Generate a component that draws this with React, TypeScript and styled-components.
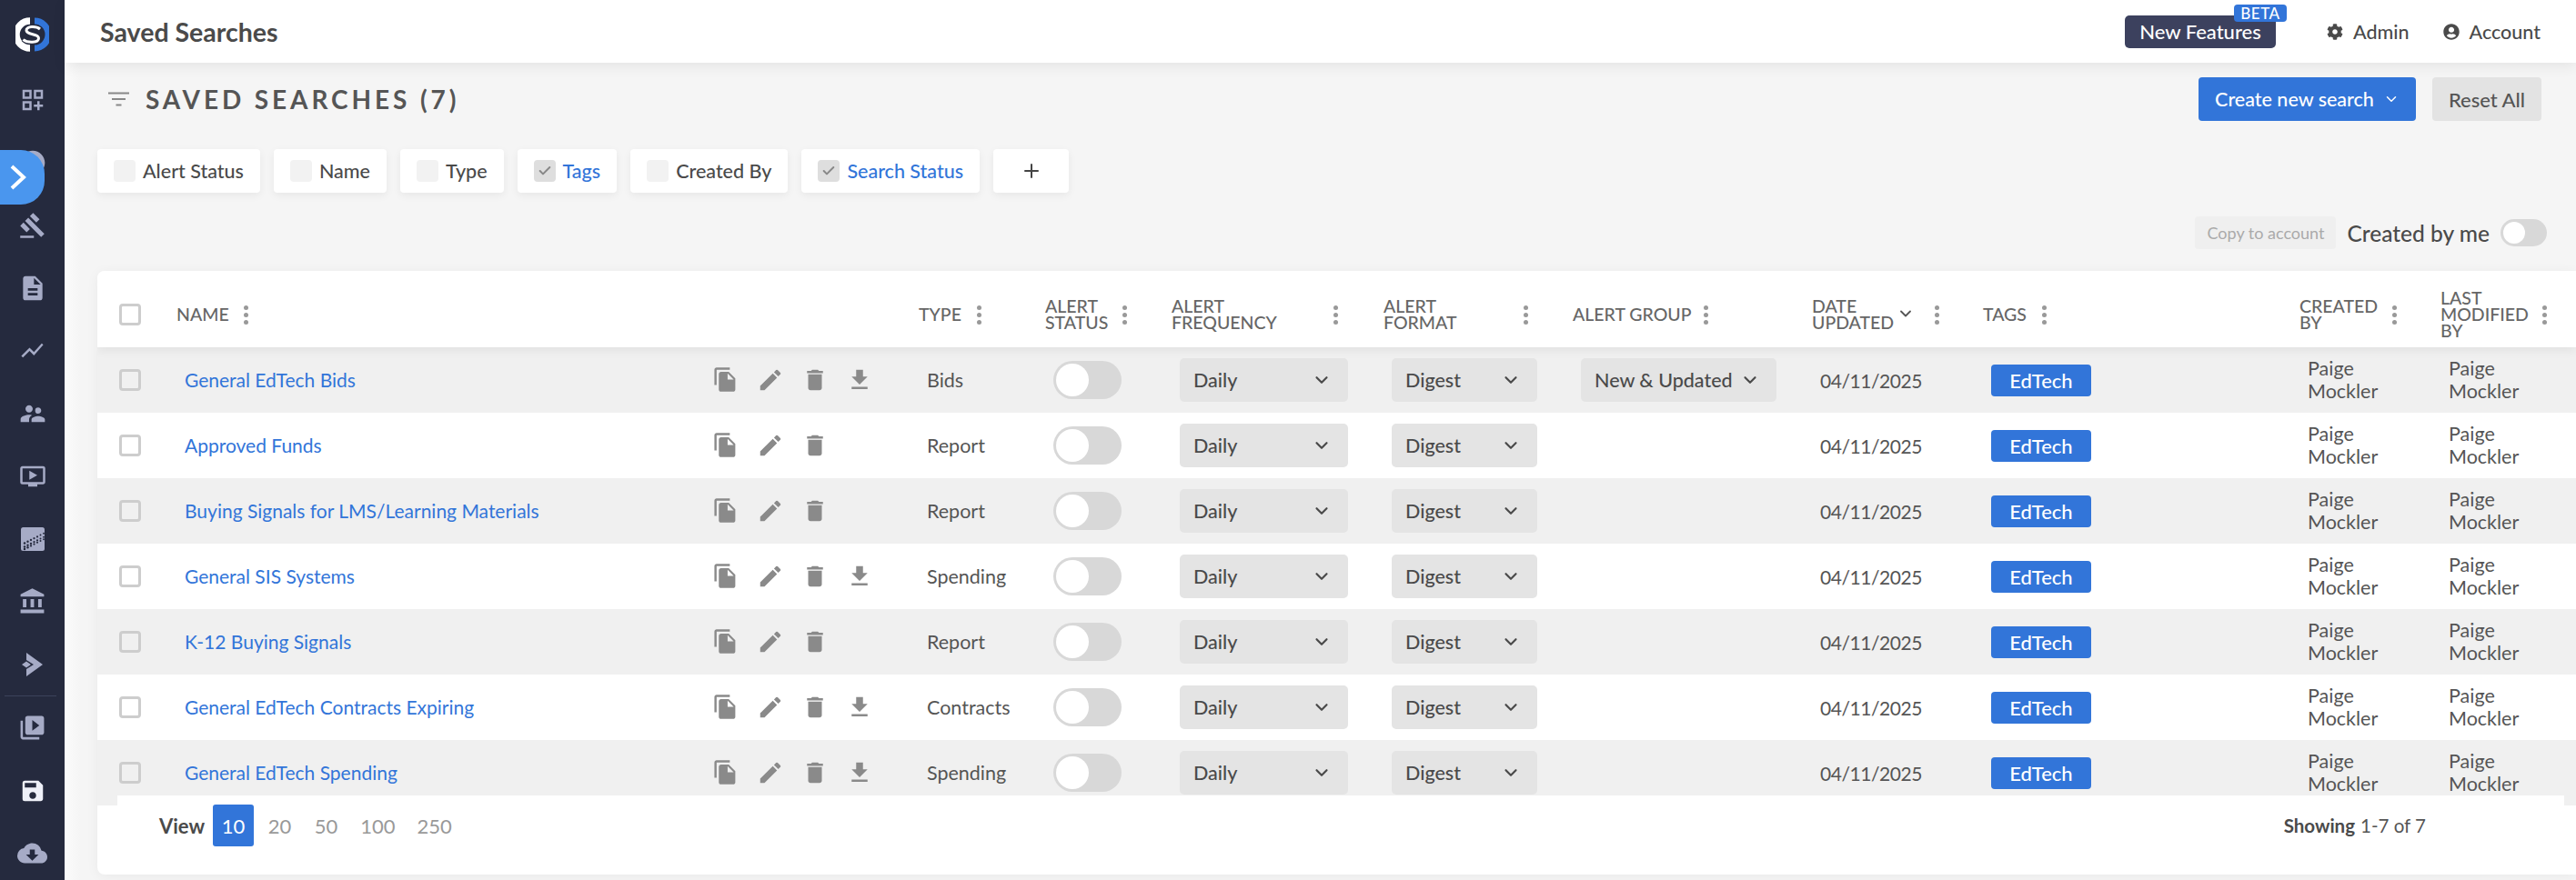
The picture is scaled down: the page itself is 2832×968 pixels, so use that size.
import React from "react";
import styled, { createGlobalStyle } from "styled-components";
import { ChevronDown, Check, Plus } from "lucide-react";
import { FaCog, FaUserCircle } from "react-icons/fa";
import {
  MdOutlineDashboardCustomize,
  MdAccountCircle,
  MdGavel,
  MdDescription,
  MdShowChart,
  MdSupervisorAccount,
  MdOndemandVideo,
  MdAccountBalance,
  MdVideoLibrary,
  MdSave,
  MdCloudDownload,
  MdFileCopy,
  MdEdit,
  MdDelete,
  MdFileDownload,
} from "react-icons/md";

const COLUMNS = "77px 590px 226px 139px 139px 233px 208px 263px 188px 348px 155px 1fr";

const GlobalStyle = createGlobalStyle`
  html, body {
    margin: 0;
    padding: 0;
    height: 968px;
    overflow: hidden;
    background: #f5f5f5;
    font-family: Lato, "Open Sans", sans-serif;
    color: #555;
  }
`;

const Page = styled.div`
  display: flex;
  width: 2832px;
  height: 968px;
  overflow: hidden;
`;

const Sidebar = styled.nav`
  position: relative;
  flex: 0 0 71px;
  background: #252a3e;
  display: flex;
  flex-direction: column;
  color: #a6abc6;
`;

const LogoBox = styled.div`
  height: 75px;
  display: flex;
  justify-content: center;
  align-items: center;
  flex: 0 0 75px;
`;

const NavItem = styled.div<{ $light?: boolean }>`
  height: 69px;
  flex: 0 0 69px;
  display: flex;
  justify-content: center;
  align-items: center;
  color: ${(p) => (p.$light ? "#eef0f8" : "#a6abc6")};
`;

const Divider = styled.div`
  height: 1px;
  flex: 0 0 1px;
  margin: 0 9px 0 5px;
  background: #3c425b;
`;

const ExpandTab = styled.div`
  position: absolute;
  left: 0;
  top: 165px;
  width: 49px;
  height: 60px;
  background: #4a96ee;
  border-radius: 0 26px 26px 0;
  display: flex;
  align-items: center;
  padding-left: 11px;
  box-sizing: border-box;
`;

const Main = styled.main`
  flex: 1;
  min-width: 0;
  display: flex;
  flex-direction: column;
`;

const Header = styled.header`
  height: 69px;
  flex: 0 0 69px;
  background: #fff;
  box-shadow: 0 4px 14px rgba(0, 0, 0, 0.07);
  display: flex;
  align-items: center;
  justify-content: space-between;
  padding: 0 39px;
  position: relative;
  z-index: 2;
`;

const PageName = styled.h1`
  margin: 0;
  font-size: 28.5px;
  font-weight: 700;
  color: #4a4a4a;
`;

const HeaderRight = styled.div`
  display: flex;
  align-items: center;
`;

const FeaturesButton = styled.div`
  position: relative;
  width: 166px;
  height: 36px;
  background: #3c415e;
  border-radius: 5px;
  color: #fff;
  font-size: 22px;
  font-weight: 500;
  display: flex;
  align-items: center;
  justify-content: center;
  margin-right: 56px;
`;

const BetaBadge = styled.span`
  position: absolute;
  top: -12px;
  right: -12px;
  width: 58px;
  height: 19px;
  background: #3275d9;
  border-radius: 4px;
  color: #fff;
  font-size: 17px;
  line-height: 19px;
  text-align: center;
  letter-spacing: 0.5px;
`;

const HeaderLink = styled.div`
  display: flex;
  align-items: center;
  gap: 11px;
  font-size: 21.5px;
  font-weight: 500;
  color: #4a4a4a;
  & + & {
    margin-left: 37px;
  }
`;

const Content = styled.div`
  flex: 1;
  min-height: 0;
  padding: 16px 0 0 36px;
  background: linear-gradient(90deg, #fbfbfb, #f5f5f5 18px);
`;

const Toolbar = styled.div`
  height: 48px;
  display: flex;
  align-items: center;
  justify-content: space-between;
  padding: 0 38px 0 12px;
`;

const SectionTitle = styled.div`
  display: flex;
  align-items: center;
  gap: 18px;
  font-size: 28px;
  font-weight: 700;
  letter-spacing: 3.9px;
  color: #555;
`;

const ToolbarActions = styled.div`
  display: flex;
  gap: 18px;
`;

const PrimaryButton = styled.div`
  width: 239px;
  height: 48px;
  background: #3275d9;
  border-radius: 4px;
  color: #fff;
  font-size: 21.5px;
  font-weight: 500;
  display: flex;
  align-items: center;
  justify-content: center;
  gap: 10px;
`;

const GreyButton = styled.div`
  width: 120px;
  height: 48px;
  background: #e3e3e3;
  border-radius: 4px;
  color: #555;
  font-size: 22px;
  font-weight: 500;
  display: flex;
  align-items: center;
  justify-content: center;
`;

const Filters = styled.div`
  display: flex;
  gap: 15px;
  margin-top: 31px;
`;

const Chip = styled.div<{ $on?: boolean }>`
  height: 48px;
  background: #fff;
  border-radius: 4px;
  box-shadow: 0 3px 10px rgba(0, 0, 0, 0.06);
  display: flex;
  align-items: center;
  gap: 8px;
  padding: 0 18px;
  font-size: 21.5px;
  font-weight: 500;
  color: ${(p) => (p.$on ? "#3275d9" : "#4a4a4a")};
`;

const PlusChip = styled(Chip)`
  width: 83px;
  padding: 0;
  justify-content: center;
  box-sizing: border-box;
  color: #444;
`;

const ChipBox = styled.span<{ $on?: boolean }>`
  width: 24px;
  height: 24px;
  border-radius: 4px;
  background: ${(p) => (p.$on ? "#dedede" : "#f2f2f2")};
  display: flex;
  align-items: center;
  justify-content: center;
  color: #888;
`;

const OwnerRow = styled.div`
  height: 36px;
  margin-top: 26px;
  display: flex;
  justify-content: flex-end;
  align-items: center;
  padding-right: 32px;
`;

const CopyButton = styled.div`
  width: 155px;
  height: 36px;
  background: #efefef;
  border-radius: 4px;
  color: #aaa;
  font-size: 18px;
  display: flex;
  align-items: center;
  justify-content: center;
`;

const OwnerLabel = styled.span`
  margin: 0 12px;
  font-size: 24.5px;
  font-weight: 500;
  color: #4a4a4a;
`;

const SmallSwitch = styled.span`
  width: 51px;
  height: 30px;
  background: #d8d8d8;
  border-radius: 15px;
  padding: 3px;
  box-sizing: border-box;
  &::before {
    content: "";
    display: block;
    width: 24px;
    height: 24px;
    border-radius: 50%;
    background: #fff;
  }
`;

const Card = styled.section`
  margin-top: 24px;
  height: 664px;
  background: #fff;
  border-radius: 8px 0 0 8px;
  box-shadow: 0 2px 14px rgba(0, 0, 0, 0.05);
  overflow: hidden;
`;

const HeadRow = styled.div`
  position: relative;
  z-index: 1;
  height: 84px;
  box-sizing: border-box;
  padding-top: 12px;
  display: grid;
  grid-template-columns: ${COLUMNS};
  align-items: center;
  background: #fff;
  box-shadow: 0 4px 10px rgba(0, 0, 0, 0.06);
`;

const HeadCell = styled.div`
  display: flex;
  align-items: center;
  padding-left: 10px;
  font-size: 19.5px;
  line-height: 18px;
  font-weight: 500;
  color: #666;
  text-transform: uppercase;
`;

const HeadLabel = styled.div<{ $w: number }>`
  width: ${(p) => p.$w}px;
  flex: 0 0 auto;
  display: flex;
  align-items: center;
  span {
    display: block;
  }
`;

const Kebab = styled.span`
  display: flex;
  flex-direction: column;
  gap: 3px;
  i {
    width: 5px;
    height: 5px;
    border-radius: 50%;
    background: #999;
  }
`;

const SortIcon = styled.span`
  display: flex;
  margin-left: 3px;
  color: #555;
`;

const Body = styled.div`
  height: 504px;
`;

const Row = styled.div<{ $alt: boolean }>`
  height: 72px;
  display: grid;
  grid-template-columns: ${COLUMNS};
  align-items: center;
  background: ${(p) => (p.$alt ? "#f0f0f0" : "#fff")};
`;

const CheckCell = styled.div`
  padding-left: 24px;
`;

const BoxMark = styled.span`
  display: block;
  width: 24px;
  height: 24px;
  box-sizing: border-box;
  border: 3px solid #cdcdcd;
  border-radius: 4px;
`;

const Cell = styled.div`
  padding-left: 19px;
  font-size: 21.5px;
  color: #555;
`;

const DateCell = styled(Cell)`
  font-size: 21px;
  letter-spacing: -0.45px;
`;

const NameLink = styled.a`
  color: #3275d9;
  font-size: 21px;
  text-decoration: none;
`;

const Actions = styled.div`
  display: flex;
  color: #8a8a8a;
  margin-left: -1px;
`;

const ActionSlot = styled.span`
  width: 49px;
  display: flex;
  justify-content: center;
`;

const Toggle = styled.span`
  display: block;
  width: 75px;
  height: 42px;
  background: #d8d8d8;
  border-radius: 21px;
  padding: 3px;
  box-sizing: border-box;
  &::before {
    content: "";
    display: block;
    width: 36px;
    height: 36px;
    border-radius: 50%;
    background: #fff;
  }
`;

const Select = styled.div<{ $w: number }>`
  width: ${(p) => p.$w}px;
  height: 48px;
  box-sizing: border-box;
  background: #e4e4e4;
  border-radius: 5px;
  display: flex;
  align-items: center;
  justify-content: space-between;
  padding: 0 18px 0 15px;
  font-size: 21.5px;
  font-weight: 500;
  color: #4a4a4a;
`;

const Tag = styled.span`
  display: flex;
  width: 110px;
  height: 35px;
  background: #3275d9;
  border-radius: 4px;
  color: #fff;
  font-size: 22px;
  font-weight: 500;
  align-items: center;
  justify-content: center;
`;

const PersonCell = styled(Cell)`
  line-height: 25px;
  width: 90px;
`;

const Footer = styled.div`
  position: relative;
  height: 87px;
  margin: -11px 13px 0 22px;
  background: #fff;
  display: flex;
  align-items: flex-start;
  justify-content: space-between;
  padding: 10px 152px 0 46px;
  box-sizing: border-box;
`;

const Pager = styled.div`
  display: flex;
  align-items: center;
  font-size: 22px;
  color: #999;
`;

const ViewLabel = styled.span`
  font-weight: 700;
  color: #4a4a4a;
  margin-right: 9px;
`;

const PageNum = styled.span<{ $active?: boolean }>`
  height: 46px;
  min-width: 45px;
  box-sizing: border-box;
  padding: 0 9px;
  margin-right: 6px;
  display: flex;
  align-items: center;
  justify-content: center;
  border-radius: 3px;
  background: ${(p) => (p.$active ? "#3275d9" : "transparent")};
  color: ${(p) => (p.$active ? "#fff" : "#999")};
`;

const Showing = styled.div`
  height: 46px;
  display: flex;
  align-items: center;
  gap: 6px;
  font-size: 20.5px;
  color: #555;
  b {
    font-weight: 700;
    color: #4a4a4a;
  }
`;

const Logo = () => (
  <svg width="37" height="38" viewBox="0 0 37 38" fill="none">
    <path d="M16 4A15 15 0 0 0 16 34" stroke="#fff" strokeWidth="7.5" />
    <path d="M21 4A15 15 0 0 1 21 34" stroke="#3275d9" strokeWidth="7" />
    <path d="M27 13C23 9.5 11.5 9.5 12 14.5C12.5 20 25.5 17.5 25.5 23C25.5 28.5 13 28.5 8.5 24.5" stroke="#252a3e" strokeWidth="5" />
    <path d="M27 13C23 9.5 11.5 9.5 12 14.5C12.5 20 25.5 17.5 25.5 23C25.5 28.5 13 28.5 8.5 24.5" stroke="#fff" strokeWidth="3" />
  </svg>
);

const dots: [number, number, number][] = [];
for (let c = 0; c < 7; c++) {
  for (let r = 0; r < 3; r++) {
    dots.push([4 + c * 3.5, 24 - c * 1.8 - r * 3.2 + (r % 2) * 0.8, 1.25 - c * 0.05]);
  }
}

const PatternIcon = () => (
  <svg width="26" height="26" viewBox="0 0 26 26">
    <rect width="26" height="26" rx="2.5" fill="#a6abc6" />
    {dots.map(([x, y, r], i) => (
      <circle key={i} cx={x} cy={y} r={r} fill="#252a3e" />
    ))}
  </svg>
);

const PointerIcon = () => (
  <svg width="24" height="26" viewBox="0 0 24 26" fill="#a6abc6">
    <polygon points="5,0 23,13 5,26 5,18 13,13 5,8" />
    <polygon points="0,13 5,9.5 10,13 5,16.5" />
  </svg>
);

const FilterIcon = () => (
  <svg width="23" height="16" viewBox="0 0 23 16" fill="none" stroke="#888" strokeWidth="2">
    <path d="M0 1.5H23M4 8H19M8.5 14.5H14.5" />
  </svg>
);

type Rec = { name: string; type: string; download: boolean; group?: boolean };

const records: Rec[] = [
  { name: "General EdTech Bids", type: "Bids", download: true, group: true },
  { name: "Approved Funds", type: "Report", download: false },
  { name: "Buying Signals for LMS/Learning Materials", type: "Report", download: false },
  { name: "General SIS Systems", type: "Spending", download: true },
  { name: "K-12 Buying Signals", type: "Report", download: false },
  { name: "General EdTech Contracts Expiring", type: "Contracts", download: true },
  { name: "General EdTech Spending", type: "Spending", download: true },
];

const headers: { lines: string[]; w: number; sort?: boolean }[] = [
  { lines: ["Type"], w: 64 },
  { lines: ["Alert", "Status"], w: 85 },
  { lines: ["Alert", "Frequency"], w: 178 },
  { lines: ["Alert", "Format"], w: 154 },
  { lines: ["Alert Group"], w: 144 },
  { lines: ["Date", "Updated"], w: 135, sort: true },
  { lines: ["Tags"], w: 65 },
  { lines: ["Created", "By"], w: 102 },
  { lines: ["Last", "Modified", "By"], w: 112 },
];

const Dots = () => (
  <Kebab>
    <i />
    <i />
    <i />
  </Kebab>
);

const Dropdown = ({ label, w }: { label: string; w: number }) => (
  <Select $w={w}>
    {label}
    <ChevronDown size={22} strokeWidth={2.4} />
  </Select>
);

const App = () => {
  return (
    <Page>
      <GlobalStyle />
      <Sidebar>
        <LogoBox>
          <Logo />
        </LogoBox>
        <NavItem><MdOutlineDashboardCustomize size={30} /></NavItem>
        <NavItem><MdAccountCircle size={32} /></NavItem>
        <NavItem><MdGavel size={30} /></NavItem>
        <NavItem><MdDescription size={32} /></NavItem>
        <NavItem><MdShowChart size={29} /></NavItem>
        <NavItem><MdSupervisorAccount size={32} /></NavItem>
        <NavItem><MdOndemandVideo size={30} /></NavItem>
        <NavItem><PatternIcon /></NavItem>
        <NavItem><MdAccountBalance size={31} /></NavItem>
        <NavItem><PointerIcon /></NavItem>
        <Divider />
        <NavItem><MdVideoLibrary size={31} /></NavItem>
        <NavItem $light><MdSave size={30} /></NavItem>
        <NavItem><MdCloudDownload size={33} /></NavItem>
        <ExpandTab>
          <svg width="18" height="28" viewBox="0 0 18 28" fill="none" stroke="#fff" strokeWidth="4">
            <path d="M2 2L15 14L2 26" />
          </svg>
        </ExpandTab>
      </Sidebar>
      <Main>
        <Header>
          <PageName>Saved Searches</PageName>
          <HeaderRight>
            <FeaturesButton>
              New Features
              <BetaBadge>BETA</BetaBadge>
            </FeaturesButton>
            <HeaderLink>
              <FaCog size={18} />
              Admin
            </HeaderLink>
            <HeaderLink>
              <FaUserCircle size={18} />
              Account
            </HeaderLink>
          </HeaderRight>
        </Header>
        <Content>
          <Toolbar>
            <SectionTitle>
              <FilterIcon />
              SAVED SEARCHES (7)
            </SectionTitle>
            <ToolbarActions>
              <PrimaryButton>
                Create new search
                <ChevronDown size={18} strokeWidth={2} />
              </PrimaryButton>
              <GreyButton>Reset All</GreyButton>
            </ToolbarActions>
          </Toolbar>
          <Filters>
            <Chip><ChipBox />Alert Status</Chip>
            <Chip><ChipBox />Name</Chip>
            <Chip><ChipBox />Type</Chip>
            <Chip $on><ChipBox $on><Check size={16} strokeWidth={3} /></ChipBox>Tags</Chip>
            <Chip><ChipBox />Created By</Chip>
            <Chip $on><ChipBox $on><Check size={16} strokeWidth={3} /></ChipBox>Search Status</Chip>
            <PlusChip><Plus size={24} strokeWidth={2} /></PlusChip>
          </Filters>
          <OwnerRow>
            <CopyButton>Copy to account</CopyButton>
            <OwnerLabel>Created by me</OwnerLabel>
            <SmallSwitch />
          </OwnerRow>
          <Card>
            <HeadRow>
              <CheckCell><BoxMark /></CheckCell>
              <HeadCell>
                <HeadLabel $w={74}>Name</HeadLabel>
                <Dots />
              </HeadCell>
              <div />
              {headers.map((h) => (
                <HeadCell key={h.lines.join()}>
                  <HeadLabel $w={h.w}>
                    <div>
                      {h.lines.map((l) => (
                        <span key={l}>{l}</span>
                      ))}
                    </div>
                    {h.sort && (
                      <SortIcon><ChevronDown size={20} strokeWidth={2.2} /></SortIcon>
                    )}
                  </HeadLabel>
                  <Dots />
                </HeadCell>
              ))}
            </HeadRow>
            <Body>
              {records.map((r, i) => (
                <Row key={r.name} $alt={i % 2 === 0}>
                  <CheckCell><BoxMark /></CheckCell>
                  <Cell><NameLink href="#">{r.name}</NameLink></Cell>
                  <Actions>
                    <ActionSlot><MdFileCopy size={29} /></ActionSlot>
                    <ActionSlot><MdEdit size={30} /></ActionSlot>
                    <ActionSlot><MdDelete size={30} /></ActionSlot>
                    {r.download && <ActionSlot><MdFileDownload size={30} /></ActionSlot>}
                  </Actions>
                  <Cell>{r.type}</Cell>
                  <Cell><Toggle /></Cell>
                  <Cell><Dropdown label="Daily" w={185} /></Cell>
                  <Cell><Dropdown label="Digest" w={160} /></Cell>
                  <Cell>{r.group && <Dropdown label="New & Updated" w={215} />}</Cell>
                  <DateCell>04/11/2025</DateCell>
                  <Cell><Tag>EdTech</Tag></Cell>
                  <PersonCell>Paige Mockler</PersonCell>
                  <PersonCell>Paige Mockler</PersonCell>
                </Row>
              ))}
            </Body>
            <Footer>
              <Pager>
                <ViewLabel>View</ViewLabel>
                <PageNum $active>10</PageNum>
                <PageNum>20</PageNum>
                <PageNum>50</PageNum>
                <PageNum>100</PageNum>
                <PageNum>250</PageNum>
              </Pager>
              <Showing>
                <b>Showing</b> 1-7 of 7
              </Showing>
            </Footer>
          </Card>
        </Content>
      </Main>
    </Page>
  );
};

export default App;
